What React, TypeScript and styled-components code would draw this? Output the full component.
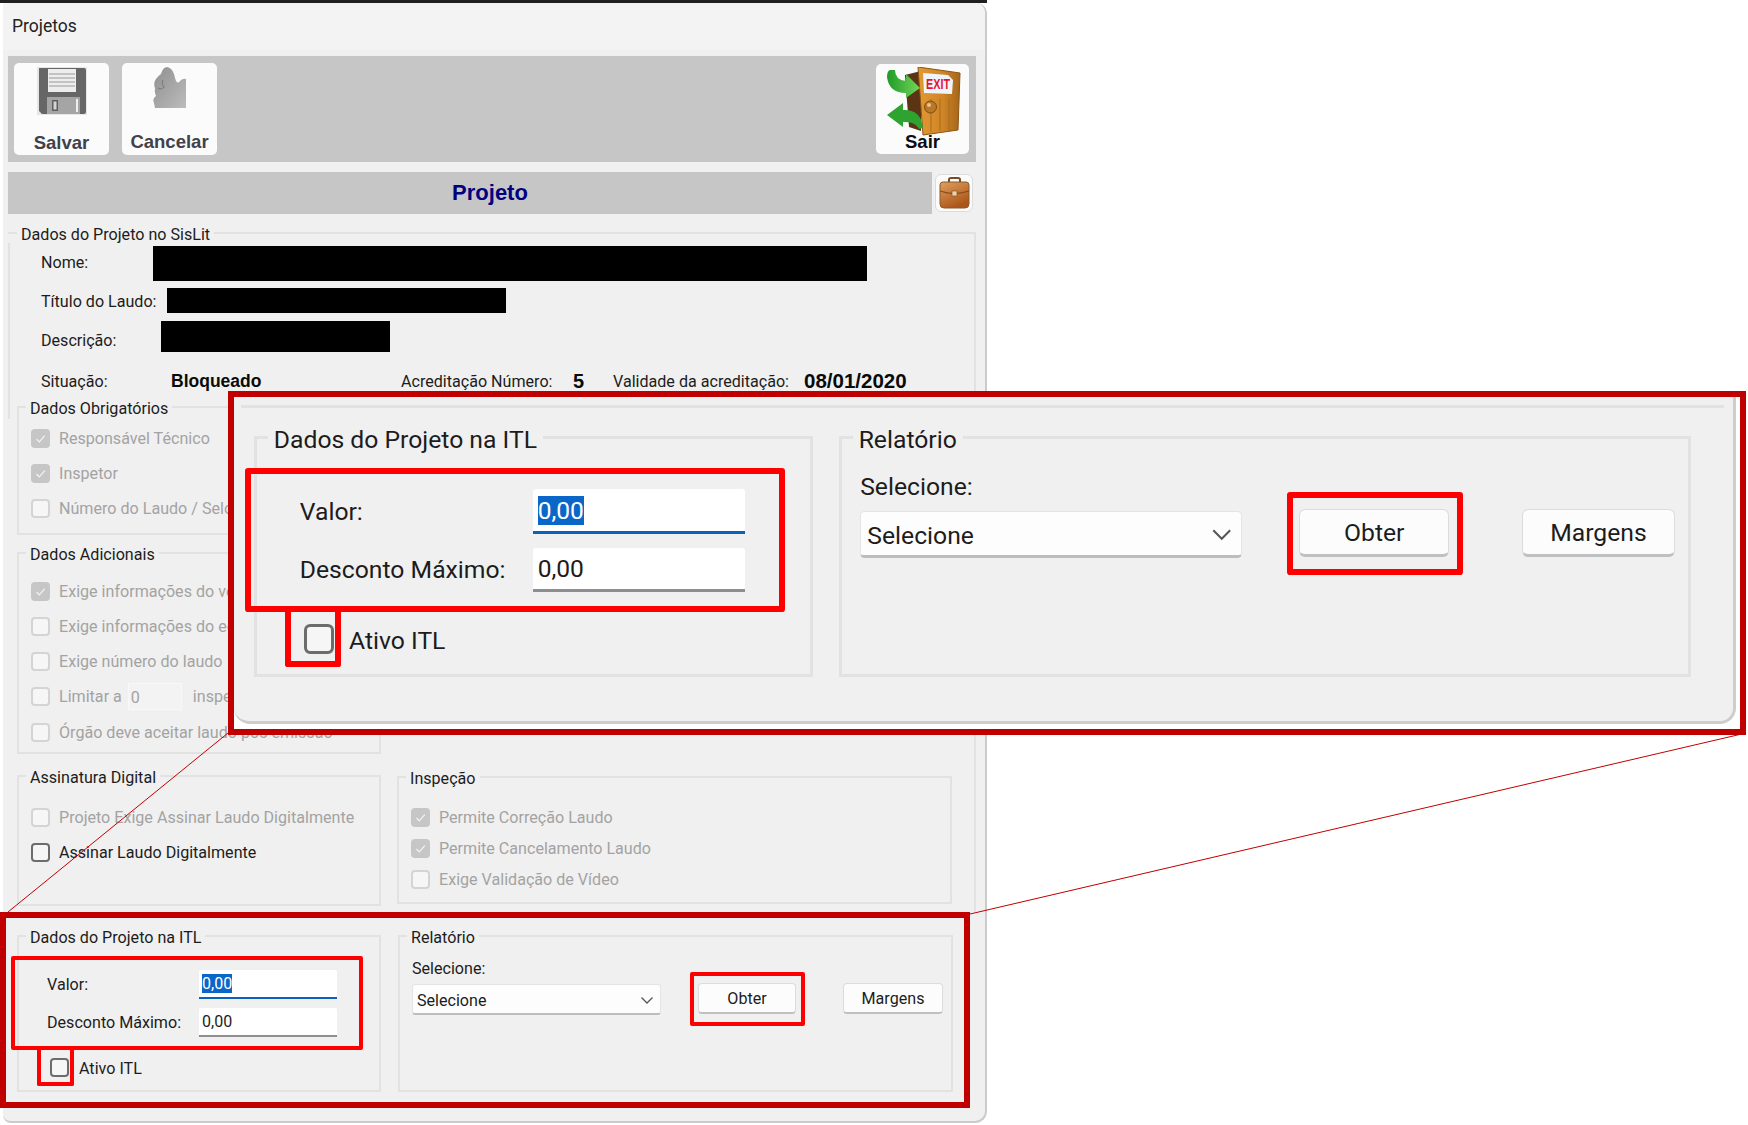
import React from "react";
import styled, { createGlobalStyle } from "styled-components";

const GlobalStyle = createGlobalStyle`
  html, body {
    margin: 0;
    padding: 0;
    background: #fff;
  }
  * {
    box-sizing: border-box;
  }
`;

const UI_FONT = `"Roboto", "Liberation Sans", sans-serif`;
const BOLD_FONT = `"Liberation Sans", Arial, sans-serif`;
const DARK_RED = "#c00000";
const RED = "#ff0000";
const LINE = "#e2e2e2";

const Page = styled.div`
  position: relative;
  width: 1748px;
  height: 1125px;
  overflow: hidden;
  background: #fff;
  font-family: ${UI_FONT};
  font-size: 16.1px;
  color: #1c1c1c;
`;
const TopStrip = styled.div`
  width: 987px;
  height: 3px;
  background: #1f1f1f;
`;
const Sliver = styled.div<{ $top: number; $height: number; $color: string }>`
  position: absolute;
  left: 985px;
  top: ${(p) => p.$top}px;
  width: 2px;
  height: ${(p) => p.$height}px;
  background: ${(p) => p.$color};
`;
const Window = styled.div`
  position: relative;
  margin-left: 3px;
  width: 984px;
  height: 1120px;
  background: #f0f0f0;
  border-right: 2px solid #cbcbcb;
  border-bottom: 2px solid #cbcbcb;
  border-radius: 0 10px 12px 8px;
`;
const TitleBar = styled.div`
  height: 47px;
  padding: 13px 0 0 9px;
  line-height: 20px;
  font-size: 17.5px;
  background: #f3f3f3;
  border-radius: 0 10px 0 0;
  color: #222;
`;
const Toolbar = styled.div`
  display: flex;
  align-items: center;
  margin: 6px 0 0 5px;
  width: 968px;
  height: 106px;
  padding: 0 7px 0 6px;
  gap: 13px;
  background: #c6c6c6;
`;
const ToolButton = styled.div<{ $push?: boolean }>`
  display: flex;
  flex-direction: column;
  align-items: center;
  width: ${(p) => (p.$push ? 93 : 95)}px;
  height: ${(p) => (p.$push ? 90 : 92)}px;
  margin-left: ${(p) => (p.$push ? "auto" : 0)};
  background: #fbfbfb;
  border-radius: 5px;
`;
const ToolIcon = styled.svg<{ $top: number }>`
  margin-top: ${(p) => p.$top}px;
  flex: none;
`;
const ToolLabel = styled.span<{ $dark?: boolean; $top: number }>`
  position: relative;
  margin-top: ${(p) => p.$top}px;
  font-family: ${BOLD_FONT};
  font-weight: 700;
  font-size: 18.5px;
  line-height: 22px;
  color: ${(p) => (p.$dark ? "#0c0c14" : "#41414a")};
`;
const HeaderRow = styled.div`
  display: flex;
  margin: 10px 0 0 5px;
  height: 42px;
`;
const HeaderBand = styled.div`
  width: 924px;
  height: 42px;
  padding-left: 40px;
  line-height: 42px;
  text-align: center;
  background: #c6c6c6;
  font-family: ${BOLD_FONT};
  font-weight: 700;
  font-size: 22px;
  color: #000080;
`;
const CaseButton = styled.div`
  display: flex;
  align-items: center;
  justify-content: center;
  margin: 2px 0 0 3px;
  width: 38px;
  height: 38px;
  background: #fbfbfb;
  border: 1px solid #dcdcdc;
  border-radius: 6px;
`;
const MainGroup = styled.fieldset`
  position: relative;
  margin: 9px 0 0 5px;
  padding: 0 0 0 9px;
  width: 968px;
  height: 689px;
  min-width: 0;
  border: 0;
  border-top: 2px solid ${LINE};
  border-right: 2px solid ${LINE};

  &::before {
    content: "";
    position: absolute;
    left: 0;
    top: 0;
    width: 2px;
    height: 176px;
    background: ${LINE};
  }
`;
const Legend = styled.legend`
  position: relative;
  top: 2px;
  margin-left: -5px;
  padding: 0 4px;
  line-height: 20px;
  color: #1c1c1c;
`;
const MainLegend = styled(Legend)`
  margin-left: 0;
`;
const InfoRow = styled.div<{ $top: number; $height: number }>`
  display: flex;
  align-items: center;
  margin-top: ${(p) => p.$top}px;
  padding-left: 24px;
  height: ${(p) => p.$height}px;
`;
const FieldLabel = styled.span<{ $width: number; $shift?: number }>`
  flex: none;
  width: ${(p) => p.$width}px;
  position: relative;
  top: ${(p) => p.$shift ?? 0}px;
  white-space: nowrap;
`;
const Redaction = styled.div<{ $width: number }>`
  width: ${(p) => p.$width}px;
  height: 100%;
  background: #000;
`;
const BoldValue = styled.span<{ $size: number; $width?: number }>`
  display: inline-block;
  flex: none;
  width: ${(p) => (p.$width ? `${p.$width}px` : "auto")};
  font-family: ${BOLD_FONT};
  font-weight: 700;
  font-size: ${(p) => p.$size}px;
  color: #0a0a0a;
`;
const Columns = styled.div`
  display: grid;
  grid-template-columns: 364px 555px;
  column-gap: 16px;
`;
const Group = styled.fieldset<{ $height: number; $gap?: number; $pad?: number }>`
  margin: ${(p) => p.$gap ?? 0}px 0 0 0;
  padding: ${(p) => p.$pad ?? 0}px 0 0 12px;
  height: ${(p) => p.$height}px;
  min-width: 0;
  border: 2px solid ${LINE};
`;
const CheckRow = styled.label<{ $height: number; $off?: boolean }>`
  display: flex;
  align-items: center;
  gap: 9px;
  height: ${(p) => p.$height}px;
  white-space: nowrap;
  color: ${(p) => (p.$off ? "#a3a3a3" : "#1c1c1c")};
`;
const Box = styled.span<{ $on?: boolean; $off?: boolean }>`
  display: flex;
  align-items: center;
  justify-content: center;
  flex: none;
  width: 19px;
  height: 19px;
  border-radius: 4px;
  background: ${(p) => (p.$on ? "#c6c6c6" : "#f6f6f6")};
  border: ${(p) =>
    p.$on ? "none" : p.$off ? "2px solid #d4d4d4" : "2px solid #6c6c6c"};
`;
const SmallInput = styled.span`
  display: inline-block;
  margin: 0 2px 0 -3px;
  padding-left: 2px;
  width: 54px;
  height: 27px;
  line-height: 27px;
  background: #f3f3f3;
  border: 1px solid #f8f8f8;
`;
const CalloutFrame = styled.div`
  margin: 0 0 0 -3px;
  position: relative;
  width: 970px;
  height: 196px;
  border: 6px solid ${DARK_RED};
  padding: 8px 0 0 11px;
`;
const ItlGrid = styled.div`
  display: grid;
  grid-template-columns: 364px 555px;
  column-gap: 17px;
`;
const ItlBox = styled.div`
  margin: 10px 0 0 -20px;
  width: 352px;
  height: 94px;
  padding: 10px 0 0 32px;
  border: 4px solid ${RED};
  border-radius: 2px;
`;
const InputRow = styled.div<{ $gap?: number }>`
  display: flex;
  align-items: center;
  margin-top: ${(p) => p.$gap ?? 0}px;
`;
const Input = styled.div<{ $focus?: boolean }>`
  position: relative;
  padding: 1px 0 0 3px;
  width: 138px;
  height: 29px;
  line-height: 26px;
  background: #fff;
  border-bottom: 2px solid ${(p) => (p.$focus ? "#0a62bd" : "#8e8e8e")};
  border-radius: 2px 2px 0 0;
  font-size: 16px;
`;
const Selected = styled.span`
  background: #0a66c8;
  color: #fff;
`;
const ActiveRow = styled.div`
  display: flex;
  align-items: flex-start;
  margin-left: 6px;
`;
const CheckFrame = styled.div`
  width: 37px;
  height: 36px;
  padding: 8px 0 0 9px;
  border: 4px solid ${RED};
  border-top: 0;
  border-radius: 0 0 2px 2px;
`;
const ActiveLabel = styled.span`
  margin: 8px 0 0 5px;
  line-height: 22px;
`;
const ReportLabel = styled.div`
  margin-top: 13px;
  line-height: 20px;
`;
const ReportRow = styled.div`
  display: flex;
  align-items: flex-start;
`;
const SelectBox = styled.div`
  display: flex;
  align-items: center;
  justify-content: space-between;
  margin-top: 5px;
  padding: 2px 6px 0 4px;
  width: 249px;
  height: 31px;
  background: #fdfdfd;
  border: 1px solid #e4e4e4;
  border-bottom: 2px solid #bdbdbd;
  border-radius: 3px;
`;
const ActionFrame = styled.div`
  margin: 26px 0 0 29px;
  width: 115px;
  height: 54px;
  padding: 7px 0 0 4px;
  border: 4px solid ${RED};
  border-radius: 2px;
`;
const ActionButton = styled.div<{ $left?: number; $top?: number }>`
  margin: ${(p) => p.$top ?? 0}px 0 0 ${(p) => p.$left ?? 0}px;
  width: ${(p) => (p.$left ? 100 : 98)}px;
  height: 31px;
  line-height: 30px;
  text-align: center;
  background: #fcfcfc;
  border: 1px solid #dcdcdc;
  border-bottom: 2px solid #c0c0c0;
  border-radius: 4px;
`;
const Overlay = styled.div`
  position: absolute;
  left: 228px;
  top: 391px;
  width: 1518px;
  height: 344px;
  border: 6px solid ${DARK_RED};
  background: #fff;
`;
const OverlayPanel = styled.div`
  height: calc(100% - 5px);
  margin-right: 4px;
  padding-top: 8px;
  background: #f0f0f0;
  border-bottom: 3px solid #cdcdcd;
  border-right: 3px solid #cdcdcd;
  border-radius: 0 0 16px 16px;
`;
const CutLine = styled.div`
  margin: 0 9px 0 7px;
  height: 3px;
  background: ${LINE};
`;
const Zoomed = styled.div`
  zoom: 1.535;
  margin: 9px 0 0 13px;
`;
const Leaders = styled.svg`
  position: absolute;
  left: 0;
  top: 0;
  pointer-events: none;
`;

const Check = () => (
  <svg width="13" height="13" viewBox="0 0 13 13">
    <path d="M2.5 7 L5.3 9.8 L10.8 3.6" fill="none" stroke="#f4f4f4" strokeWidth="1.2" />
  </svg>
);

const CheckItem = ({
  label,
  on,
  off = true,
  height,
  children,
}: {
  label: string;
  on?: boolean;
  off?: boolean;
  height: number;
  children?: React.ReactNode;
}) => (
  <CheckRow $height={height} $off={off}>
    <Box $on={on} $off={off}>{on && <Check />}</Box>
    <span>{label}</span>
    {children}
  </CheckRow>
);

const FloppyIcon = () => (
  <ToolIcon $top={4} width="50" height="48" viewBox="0 0 50 48">
    <rect x="0" y="0" width="50" height="48" fill="#e6e6e6" />
    <path d="M2 1 H47 Q49 1 49 3 V45 Q49 47 47 47 H5 L2 44 Z" fill="#666" />
    <rect x="11" y="2" width="28" height="23" fill="#ededed" />
    <path d="M12 7 H38 M12 11 H38 M12 15 H38 M12 19 H38" stroke="#9a9a9a" strokeWidth="1.2" />
    <rect x="10" y="30" width="33" height="17" fill="#a5a5a5" />
    <rect x="15" y="33" width="6" height="11" fill="#5f5f5f" />
    <rect x="16.5" y="34.5" width="3" height="8" fill="#d4d4d4" />
    <rect x="39" y="32" width="2" height="13" fill="#eee" />
  </ToolIcon>
);

const CancelIcon = () => (
  <ToolIcon $top={3} width="36" height="44" viewBox="0 0 36 44">
    <defs>
      <linearGradient id="cancelFill" x1="0" y1="0" x2="1" y2="1">
        <stop offset="0" stopColor="#8f8f8f" />
        <stop offset="1" stopColor="#bcbcbc" />
      </linearGradient>
    </defs>
    <path
      d="M3 42 L2 37 Q0 33 4 30 Q2 26 3 22 Q1 17 4 13 Q6 10 9 8 Q11 1 15 1 Q20 2 22 8 Q23 12 24 15 Q26 18 28 15 Q31 12 34 13 L34 42 Z"
      fill="url(#cancelFill)"
    />
    <path d="M6 22 Q10 24 12 21 Q9 18 11 14" fill="none" stroke="#7f7f7f" strokeWidth="1.2" />
  </ToolIcon>
);

const DoorIcon = () => (
  <ToolIcon $top={3} width="76" height="70" viewBox="0 0 76 70">
    <defs>
      <linearGradient id="doorFill" x1="0" y1="0" x2="1" y2="0">
        <stop offset="0" stopColor="#e29a34" />
        <stop offset="0.6" stopColor="#cf8426" />
        <stop offset="1" stopColor="#a5651a" />
      </linearGradient>
      <linearGradient id="arrowFill" x1="0" y1="0" x2="1" y2="0">
        <stop offset="0" stopColor="#1f9a26" />
        <stop offset="1" stopColor="#74d65a" />
      </linearGradient>
    </defs>
    <path d="M20 8 L36 4 V64 L24 60 Z" fill="#5a3414" />
    <path d="M33 0 L75 6 L73 63 L38 68 Z" fill="url(#doorFill)" stroke="#8a5413" strokeWidth="1" />
    <path d="M46 32 V65 M55 32 V64 M64 32 V63" stroke="#a96b1c" strokeWidth="1" />
    <path d="M38 6 L63 8 L68 13 L67 27 L39 26 Z" fill="#eef4fb" />
    <text x="41" y="22" fontFamily={BOLD_FONT} fontWeight="700" fontSize="14" fill="#e8132c" textLength="24" lengthAdjust="spacingAndGlyphs">EXIT</text>
    <circle cx="45.5" cy="40" r="6" fill="#b9772a" stroke="#7c4d14" strokeWidth="1" />
    <circle cx="44" cy="38" r="2" fill="#e9c48c" />
    <path
      d="M10 3 Q10 13 21 14 L21 7 L35 21 L21 31 L21 26 Q4 26 2 10 Q2 4 5 3 Z"
      fill="url(#arrowFill)"
    />
    <path
      d="M34 62 Q30 54 18 55 L18 60 L2 48 L18 36 L18 43 Q36 42 38 61 Z"
      fill="#2ea32f"
    />
  </ToolIcon>
);

const CaseIcon = () => (
  <svg width="32" height="32" viewBox="0 0 32 32">
    <defs>
      <linearGradient id="caseFill" x1="0" y1="0" x2="0.5" y2="1">
        <stop offset="0" stopColor="#e0a060" />
        <stop offset="1" stopColor="#ab5518" />
      </linearGradient>
    </defs>
    <path d="M11 6 V2.5 Q11 1 13 1 H20 Q22 1 22 2.5 V6" fill="none" stroke="#7a4a22" strokeWidth="2" />
    <path d="M2 8 Q2 5 5 5 H28 Q31 5 31 8 V27 Q31 31 27 31 H6 Q2 31 2 27 Z" fill="url(#caseFill)" stroke="#8a5a2a" strokeWidth="1" />
    <path d="M2 14 Q16 19 31 14" fill="none" stroke="#8b4a18" strokeWidth="1.2" />
    <rect x="14" y="14" width="5" height="5" fill="#e9d4a8" stroke="#7a4a22" strokeWidth="0.6" />
  </svg>
);

const ItlPanel = () => (
  <ItlGrid>
    <Group $height={166}>
      <Legend>Dados do Projeto na ITL</Legend>
      <ItlBox>
        <InputRow>
          <FieldLabel $width={152}>Valor:</FieldLabel>
          <Input $focus><Selected>0,00</Selected></Input>
        </InputRow>
        <InputRow $gap={9}>
          <FieldLabel $width={152}>Desconto Máximo:</FieldLabel>
          <Input>0,00</Input>
        </InputRow>
      </ItlBox>
      <ActiveRow>
        <CheckFrame><Box /></CheckFrame>
        <ActiveLabel>Ativo ITL</ActiveLabel>
      </ActiveRow>
    </Group>
    <Group $height={166}>
      <Legend>Relatório</Legend>
      <ReportRow>
        <div>
          <ReportLabel>Selecione:</ReportLabel>
          <SelectBox>
            <span>Selecione</span>
            <svg width="14" height="9" viewBox="0 0 14 9">
              <path d="M1.5 1.5 L7 7 L12.5 1.5" fill="none" stroke="#555" strokeWidth="1.3" />
            </svg>
          </SelectBox>
        </div>
        <ActionFrame><ActionButton>Obter</ActionButton></ActionFrame>
        <ActionButton $left={38} $top={37}>Margens</ActionButton>
      </ReportRow>
    </Group>
  </ItlGrid>
);

const App = () => {
  return (
    <Page>
      <GlobalStyle />
      <TopStrip />
      <Sliver $top={112} $height={86} $color="#c0392b" />
      <Sliver $top={342} $height={13} $color="#444" />
      <Window>
        <TitleBar>Projetos</TitleBar>
        <Toolbar>
          <ToolButton>
            <FloppyIcon />
            <ToolLabel $top={17}>Salvar</ToolLabel>
          </ToolButton>
          <ToolButton>
            <CancelIcon />
            <ToolLabel $top={21}>Cancelar</ToolLabel>
          </ToolButton>
          <ToolButton $push>
            <DoorIcon />
            <ToolLabel $dark $top={-6}>Sair</ToolLabel>
          </ToolButton>
        </Toolbar>
        <HeaderRow>
          <HeaderBand>Projeto</HeaderBand>
          <CaseButton><CaseIcon /></CaseButton>
        </HeaderRow>
        <MainGroup>
          <MainLegend>Dados do Projeto no SisLit</MainLegend>
          <InfoRow $top={3} $height={35}>
            <FieldLabel $width={112} $shift={-1}>Nome:</FieldLabel>
            <Redaction $width={714} />
          </InfoRow>
          <InfoRow $top={7} $height={25}>
            <FieldLabel $width={126} $shift={1}>Título do Laudo:</FieldLabel>
            <Redaction $width={339} />
          </InfoRow>
          <InfoRow $top={8} $height={31}>
            <FieldLabel $width={120} $shift={4}>Descrição:</FieldLabel>
            <Redaction $width={229} />
          </InfoRow>
          <InfoRow $top={16} $height={26}>
            <FieldLabel $width={130}>Situação:</FieldLabel>
            <BoldValue $size={17.5} $width={230}>Bloqueado</BoldValue>
            <FieldLabel $width={172}>Acreditação Número:</FieldLabel>
            <BoldValue $size={20} $width={40}>5</BoldValue>
            <FieldLabel $width={191}>Validade da acreditação:</FieldLabel>
            <BoldValue $size={20.5}>08/01/2020</BoldValue>
          </InfoRow>
          <Columns>
            <div>
              <Group $height={138} $gap={3} $pad={4}>
                <Legend>Dados Obrigatórios</Legend>
                <CheckItem height={35} on label="Responsável Técnico" />
                <CheckItem height={35} on label="Inspetor" />
                <CheckItem height={35} label="Número do Laudo / Selo" />
              </Group>
              <Group $height={211} $gap={8} $pad={11}>
                <Legend>Dados Adicionais</Legend>
                <CheckItem height={35} on label="Exige informações do veículo" />
                <CheckItem height={35} label="Exige informações do equipamento" />
                <CheckItem height={35} label="Exige número do laudo" />
                <CheckItem height={35} label="Limitar a">
                  <SmallInput>0</SmallInput>
                  <span>inspeções</span>
                </CheckItem>
                <CheckItem height={37} label="Órgão deve aceitar laudo pós emissão" />
              </Group>
              <Group $height={140} $gap={12} $pad={14}>
                <Legend>Assinatura Digital</Legend>
                <CheckItem height={35} label="Projeto Exige Assinar Laudo Digitalmente" />
                <CheckItem height={35} off={false} label="Assinar Laudo Digitalmente" />
              </Group>
            </div>
            <Group $height={137} $gap={373} $pad={15}>
              <Legend>Inspeção</Legend>
              <CheckItem height={31} on label="Permite Correção Laudo" />
              <CheckItem height={31} on label="Permite Cancelamento Laudo" />
              <CheckItem height={31} label="Exige Validação de Vídeo" />
            </Group>
          </Columns>
        </MainGroup>
        <CalloutFrame>
          <ItlPanel />
        </CalloutFrame>
      </Window>
      <Leaders width="1748" height="1125" viewBox="0 0 1748 1125">
        <path d="M228 733 L8 912 M1746 733 L970 914" stroke={DARK_RED} strokeWidth="1" fill="none" />
      </Leaders>
      <Overlay>
        <OverlayPanel>
          <CutLine />
          <Zoomed>
            <ItlPanel />
          </Zoomed>
        </OverlayPanel>
      </Overlay>
    </Page>
  );
};
export default App;
